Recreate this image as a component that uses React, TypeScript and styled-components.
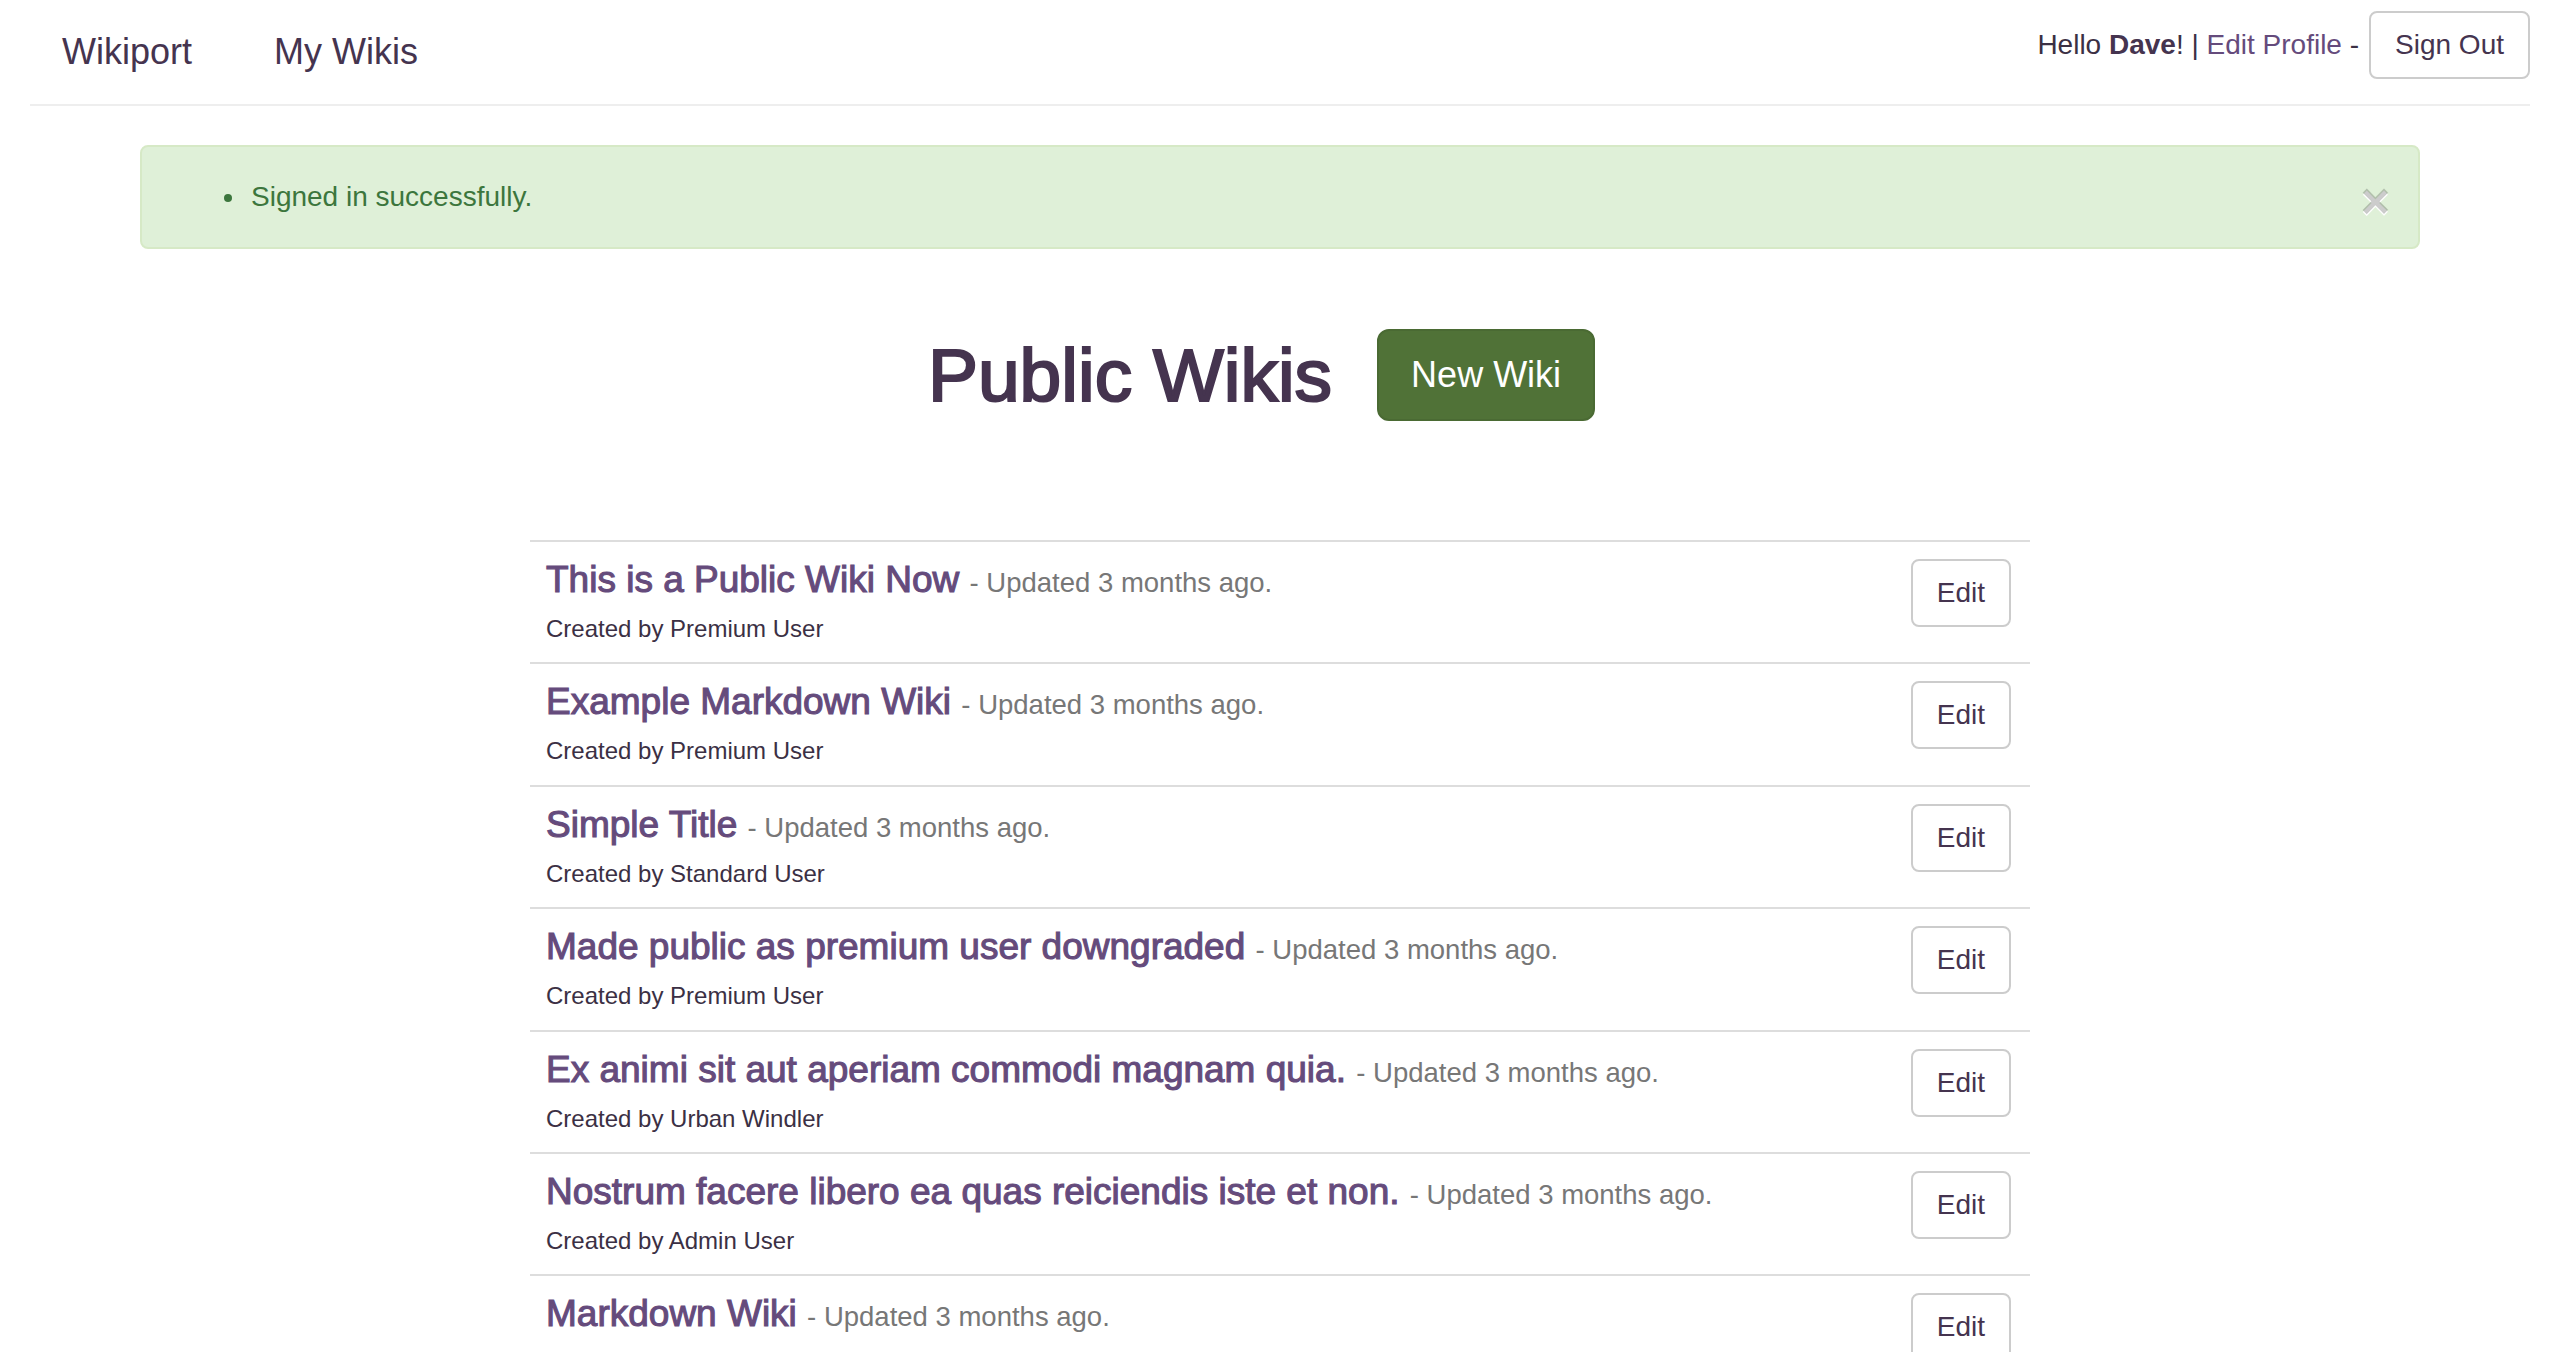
import React from "react";
import styled, { createGlobalStyle } from "styled-components";

const GlobalStyle = createGlobalStyle`
  html { overflow: hidden; }
  body {
    margin: 0;
    background: #ffffff;
    font-family: "Liberation Sans", Arial, Helvetica, sans-serif;
    color: #3b3044;
  }
  * { box-sizing: border-box; }
`;

const NavWrap = styled.header`
  padding: 0 30px;
`;

const Nav = styled.nav`
  display: flex;
  justify-content: space-between;
  align-items: flex-start;
  height: 106px;
  border-bottom: 2px solid #eeeeee;
`;

const NavLeft = styled.div`
  display: flex;
  align-items: center;
  gap: 82px;
  padding: 32px 0 0 32px;
`;

const NavItem = styled.a`
  font-size: 36px;
  line-height: 40px;
  color: #45344f;
  text-decoration: none;
`;

const NavRight = styled.div`
  display: flex;
  align-items: center;
  gap: 10px;
  padding-top: 11px;
  font-size: 28px;
  color: #3b3044;
`;

const Greeting = styled.span`
  white-space: pre;
  b { font-weight: 700; color: #45344f; }
`;

const TextLink = styled.a`
  color: #654b7c;
  text-decoration: none;
`;

const OutlineButton = styled.button<{ $offset?: number }>`
  height: 68px;
  margin-top: ${(p) => p.$offset ?? 0}px;
  padding: 0 24px;
  border: 2px solid #cccccc;
  border-radius: 8px;
  background: #ffffff;
  color: #45344f;
  font-family: inherit;
  font-size: 28px;
  line-height: 64px;
  cursor: pointer;
`;

const Container = styled.main`
  width: 2340px;
  margin: 0 auto;
  padding: 39px 30px 0;
  display: flex;
  flex-direction: column;
`;

const Alert = styled.div`
  display: flex;
  align-items: center;
  justify-content: space-between;
  height: 104px;
  padding: 0 28px 0 30px;
  background: #dff0d8;
  border: 2px solid #d6e9c6;
  border-radius: 8px;
  color: #3c763d;
  font-size: 28px;
`;

const AlertList = styled.ul`
  margin: 0;
  padding-left: 75px;
  line-height: 40px;
  li { padding-left: 4px; }
`;

const CloseButton = styled.button`
  border: 0;
  background: transparent;
  padding: 8px 0 0;
  font-family: inherit;
  font-size: 50px;
  font-weight: 700;
  line-height: 40px;
  color: rgba(0, 0, 0, 0.2);
  -webkit-text-stroke: 1px rgba(0, 0, 0, 0.05);
  text-shadow: 0 2px 0 #ffffff;
  cursor: pointer;
`;

const HeadingRow = styled.div`
  display: flex;
  justify-content: center;
  align-items: center;
  gap: 45px;
  height: 92px;
  margin-top: 80px;
  padding-right: 37px;
`;

const Title = styled.h1`
  margin: 0;
  font-size: 75px;
  line-height: 80px;
  font-weight: 400;
  -webkit-text-stroke: 2.2px #45344f;
  color: #45344f;
`;

const PrimaryButton = styled.button`
  height: 92px;
  padding: 0 32px;
  border: 2px solid #4a6a33;
  border-radius: 12px;
  background: #507237;
  color: #ffffff;
  font-family: inherit;
  font-size: 36px;
  line-height: 88px;
  cursor: pointer;
`;

const WikiList = styled.section`
  width: 1500px;
  align-self: center;
  margin-top: 119px;
`;

const Row = styled.article`
  display: flex;
  justify-content: space-between;
  align-items: flex-start;
  height: 122.4px;
  padding: 16px 19px 0 16px;
  border-top: 2px solid #dddddd;
`;

const RowText = styled.div`
  display: flex;
  flex-direction: column;
`;

const WikiTitle = styled.h4`
  margin: 2px 0 12px;
  height: 40px;
  font-size: 37px;
  line-height: 40px;
  font-weight: 400;
  white-space: nowrap;
`;

const WikiLink = styled.a`
  color: #654b7c;
  text-decoration: none;
  -webkit-text-stroke: 1.1px #654b7c;
`;

const Updated = styled.small`
  font-size: 27.5px;
  line-height: 1;
  color: #777777;
`;

const Author = styled.p`
  margin: 0;
  font-size: 24px;
  line-height: 34px;
  color: #3b3044;
`;

const wikis = [
  { title: "This is a Public Wiki Now", author: "Premium User" },
  { title: "Example Markdown Wiki", author: "Premium User" },
  { title: "Simple Title", author: "Standard User" },
  { title: "Made public as premium user downgraded", author: "Premium User" },
  { title: "Ex animi sit aut aperiam commodi magnam quia.", author: "Urban Windler" },
  { title: "Nostrum facere libero ea quas reiciendis iste et non.", author: "Admin User" },
  { title: "Markdown Wiki", author: "Premium User" },
];

export default function App() {
  return (
    <>
      <GlobalStyle />
      <NavWrap>
        <Nav>
          <NavLeft>
            <NavItem href="#">Wikiport</NavItem>
            <NavItem href="#">My Wikis</NavItem>
          </NavLeft>
          <NavRight>
            <Greeting>
              Hello <b>Dave</b>! | <TextLink href="#">Edit Profile</TextLink> -
            </Greeting>
            <OutlineButton>Sign Out</OutlineButton>
          </NavRight>
        </Nav>
      </NavWrap>
      <Container>
        <Alert>
          <AlertList>
            <li>Signed in successfully.</li>
          </AlertList>
          <CloseButton aria-label="Close">×</CloseButton>
        </Alert>
        <HeadingRow>
          <Title>Public Wikis</Title>
          <PrimaryButton>New Wiki</PrimaryButton>
        </HeadingRow>
        <WikiList>
          {wikis.map((w) => (
            <Row key={w.title}>
              <RowText>
                <WikiTitle>
                  <WikiLink href="#">{w.title}</WikiLink>{" "}
                  <Updated>- Updated 3 months ago.</Updated>
                </WikiTitle>
                <Author>Created by {w.author}</Author>
              </RowText>
              <OutlineButton $offset={1}>Edit</OutlineButton>
            </Row>
          ))}
        </WikiList>
      </Container>
    </>
  );
}
